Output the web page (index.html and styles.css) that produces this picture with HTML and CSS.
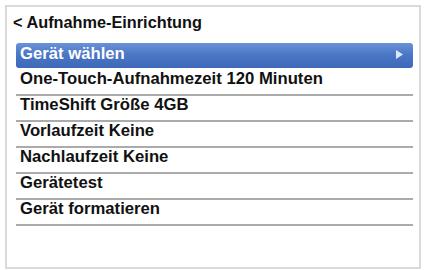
FILE: index.html
```html
<!DOCTYPE html>
<html>
<head>
<meta charset="utf-8">
<link rel="stylesheet" href="styles.css">
</head>
<body>
<div class="frame">
  <div class="title">&lt; Aufnahme-Einrichtung</div>
  <div class="menu">
    <div class="item sel"><span>Gerät wählen</span><svg class="arrow" width="7" height="9" viewBox="0 0 7 9"><path d="M0 0 L7 4.5 L0 9 Z" fill="#dfe7f6"/></svg></div>
    <div class="item first">One-Touch-Aufnahmezeit 120 Minuten</div>
    <div class="item">TimeShift Größe 4GB</div>
    <div class="item">Vorlaufzeit Keine</div>
    <div class="item">Nachlaufzeit Keine</div>
    <div class="item">Gerätetest</div>
    <div class="item">Gerät formatieren</div>
  </div>
</div>
</body>
</html>
```

FILE: styles.css
```css
html, body {
  margin: 0;
  padding: 0;
  background: #ffffff;
}
body {
  width: 426px;
  height: 270px;
  overflow: hidden;
  font-family: "Liberation Sans", Arial, sans-serif;
  font-weight: bold;
  font-size: 16.7px;
  color: #111111;
}
.frame {
  box-sizing: border-box;
  margin: 5px 5px 0 5px;
  height: 264px;
  border: 2px solid #dadada;
  background: #ffffff;
}
.title {
  margin: 6px 0 0 6px;
  font-size: 16.3px;
  line-height: 18px;
  height: 18px;
}
.menu {
  margin: 12px 0 0 9px;
  width: 397px;
}
.item {
  box-sizing: border-box;
  height: 26px;
  padding-left: 4px;
  line-height: 18px;
  border-bottom: 2px solid #ababab;
  white-space: nowrap;
}
.item.first {
  height: 28px;
  padding-top: 2px;
}
.item.sel {
  height: 25px;
  padding-top: 2px;
  border-bottom: none;
  border-radius: 3px;
  color: #ffffff;
  background: linear-gradient(#6a92d8 0%, #4b77c6 45%, #3d68b8 100%);
  display: flex;
  align-items: flex-start;
  justify-content: space-between;
  padding-right: 10px;
}
.arrow {
  margin-top: 5px;
}
```
